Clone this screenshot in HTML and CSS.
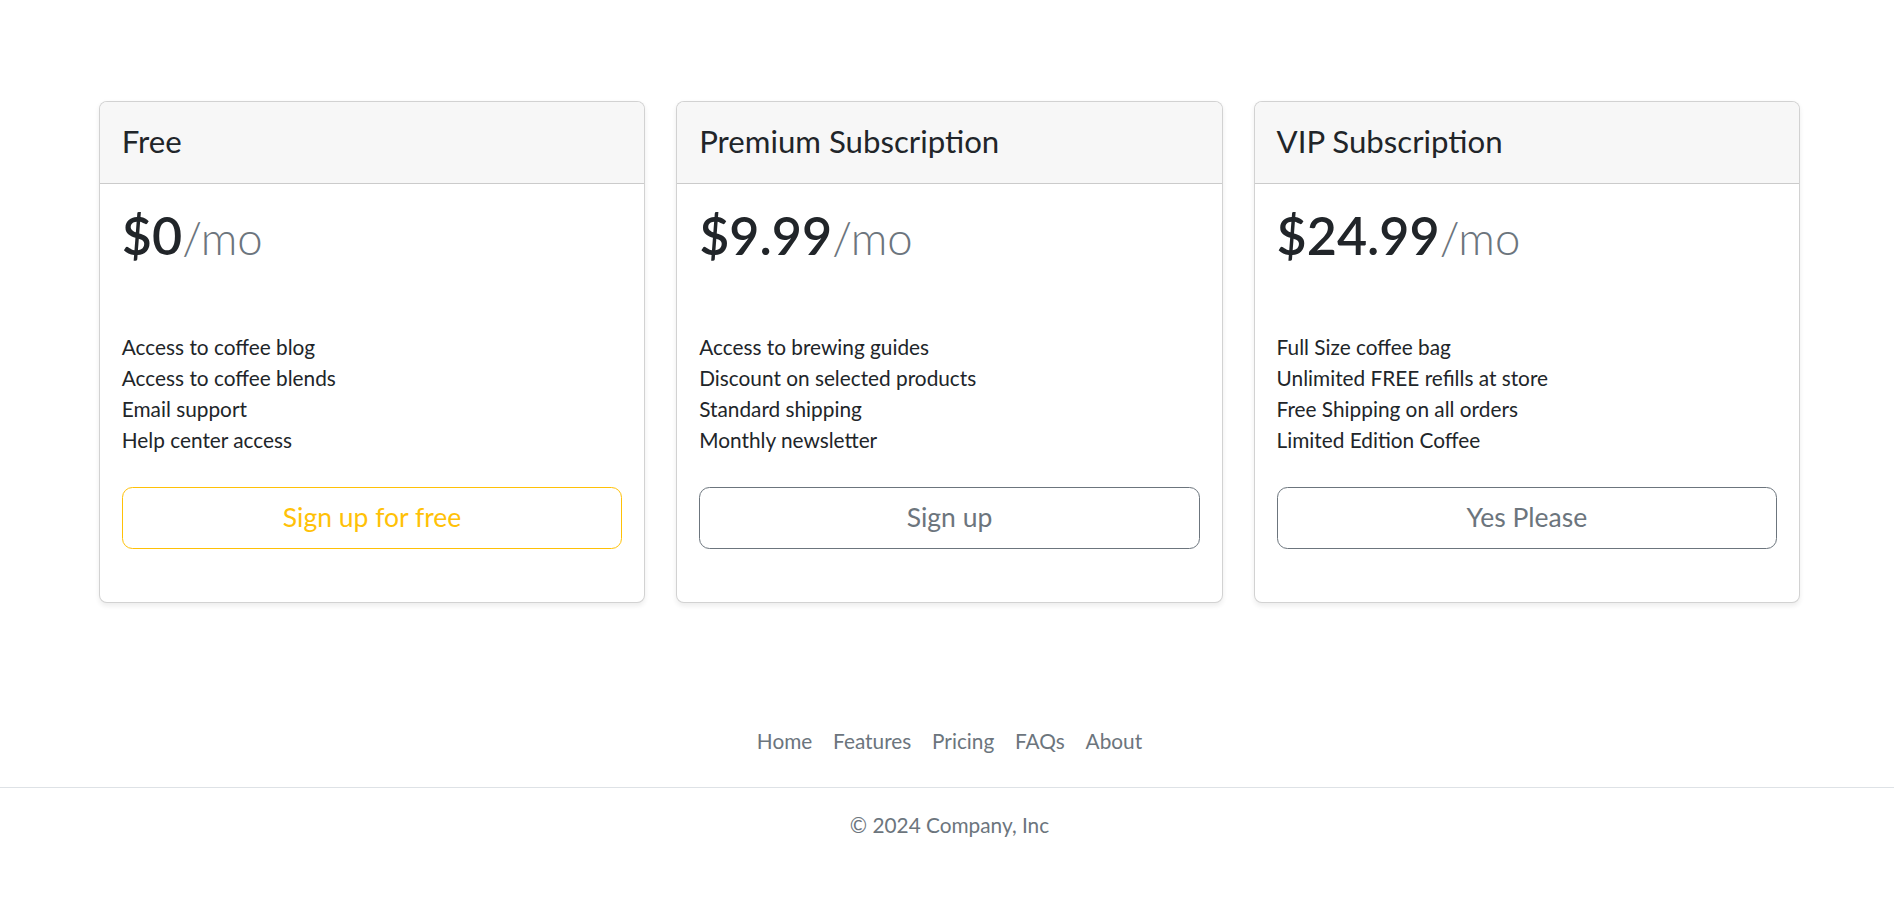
FILE: index.html
```html
<!DOCTYPE html>
<html lang="en">
<head>
<meta charset="utf-8">
<title>Pricing</title>
<link rel="stylesheet" href="styles.css">
</head>
<body>
<main class="page">
  <div class="cards">
    <div class="card">
      <div class="card-header"><h4 class="card-title">Free</h4></div>
      <div class="card-body">
        <h1 class="price">$0<small class="per">/mo</small></h1>
        <ul class="features">
          <li>Access to coffee blog</li>
          <li>Access to coffee blends</li>
          <li>Email support</li>
          <li>Help center access</li>
        </ul>
        <button type="button" class="btn btn-warning">Sign up for free</button>
      </div>
    </div>
    <div class="card">
      <div class="card-header"><h4 class="card-title">Premium Subscription</h4></div>
      <div class="card-body">
        <h1 class="price">$9.99<small class="per">/mo</small></h1>
        <ul class="features">
          <li>Access to brewing guides</li>
          <li>Discount on selected products</li>
          <li>Standard shipping</li>
          <li>Monthly newsletter</li>
        </ul>
        <button type="button" class="btn btn-secondary">Sign up</button>
      </div>
    </div>
    <div class="card">
      <div class="card-header"><h4 class="card-title">VIP Subscription</h4></div>
      <div class="card-body">
        <h1 class="price">$24.99<small class="per">/mo</small></h1>
        <ul class="features">
          <li>Full Size coffee bag</li>
          <li>Unlimited FREE refills at store</li>
          <li>Free Shipping on all orders</li>
          <li>Limited Edition Coffee</li>
        </ul>
        <button type="button" class="btn btn-secondary">Yes Please</button>
      </div>
    </div>
  </div>
</main>
<footer class="footer">
  <ul class="footer-nav">
    <li><a href="#" class="footer-link">Home</a></li>
    <li><a href="#" class="footer-link">Features</a></li>
    <li><a href="#" class="footer-link">Pricing</a></li>
    <li><a href="#" class="footer-link">FAQs</a></li>
    <li><a href="#" class="footer-link">About</a></li>
  </ul>
  <p class="copyright">© 2024 Company, Inc</p>
</footer>
</body>
</html>
```
FILE: styles.css
```css
* { box-sizing: border-box; }
html, body { margin: 0; padding: 0; }
body {
  font-family: "Lato", "Open Sans", "Liberation Sans", sans-serif;
  font-size: 20.8px;
  line-height: 1.5;
  color: #212529;
  background: #fff;
}
.page {
  padding: 101px 94px 0 99px;
}
.cards {
  display: grid;
  grid-template-columns: repeat(3, 1fr);
  gap: 31.2px;
}
.card {
  border: 1px solid rgba(0,0,0,.175);
  border-radius: 8px;
  background: #fff;
  box-shadow: 0 2.6px 5.2px rgba(0,0,0,.075);
  overflow: hidden;
}
.card-header {
  background: #f7f7f7;
  border-bottom: 1px solid rgba(0,0,0,.175);
  padding: 21.3px 21.8px 21.8px;
}
.card-title {
  margin: 0;
  font-size: 31.2px;
  font-weight: 400;
  line-height: 1.2;
}
.card-body {
  padding: 20.8px 21.8px 53px;
}
.price {
  margin: 0;
  font-size: 52px;
  font-weight: 600;
  line-height: 1.2;
}
.per {
  font-size: .875em;
  font-weight: 300;
  color: #6c757d;
}
.features {
  list-style: none;
  margin: 64px 0 31.2px;
  padding: 0;
  line-height: 31.2px;
}
.btn {
  display: block;
  width: 100%;
  font-family: inherit;
  font-size: 26.5px;
  line-height: 39px;
  padding: 10.4px 20.8px;
  border-radius: 10.4px;
  background: #fff;
  cursor: pointer;
}
.btn-warning { border: 1px solid #ffc107; color: #ffc107; }
.btn-secondary { border: 1px solid #6c757d; color: #6c757d; }
.footer {
  margin-top: 112px;
  padding-bottom: 20px;
}
.footer-nav {
  list-style: none;
  margin: 0 0 20.8px;
  padding: 0 94px 20.8px 99px;
  display: flex;
  justify-content: center;
  border-bottom: 1px solid #dee2e6;
}
.footer-link {
  display: block;
  padding: 10.4px 10.4px;
  line-height: 31.2px;
  color: #6c757d;
  text-decoration: none;
}
.copyright {
  margin: 0;
  padding: 0 94px 0 99px;
  text-align: center;
  line-height: 31.2px;
  color: #6c757d;
}
```
